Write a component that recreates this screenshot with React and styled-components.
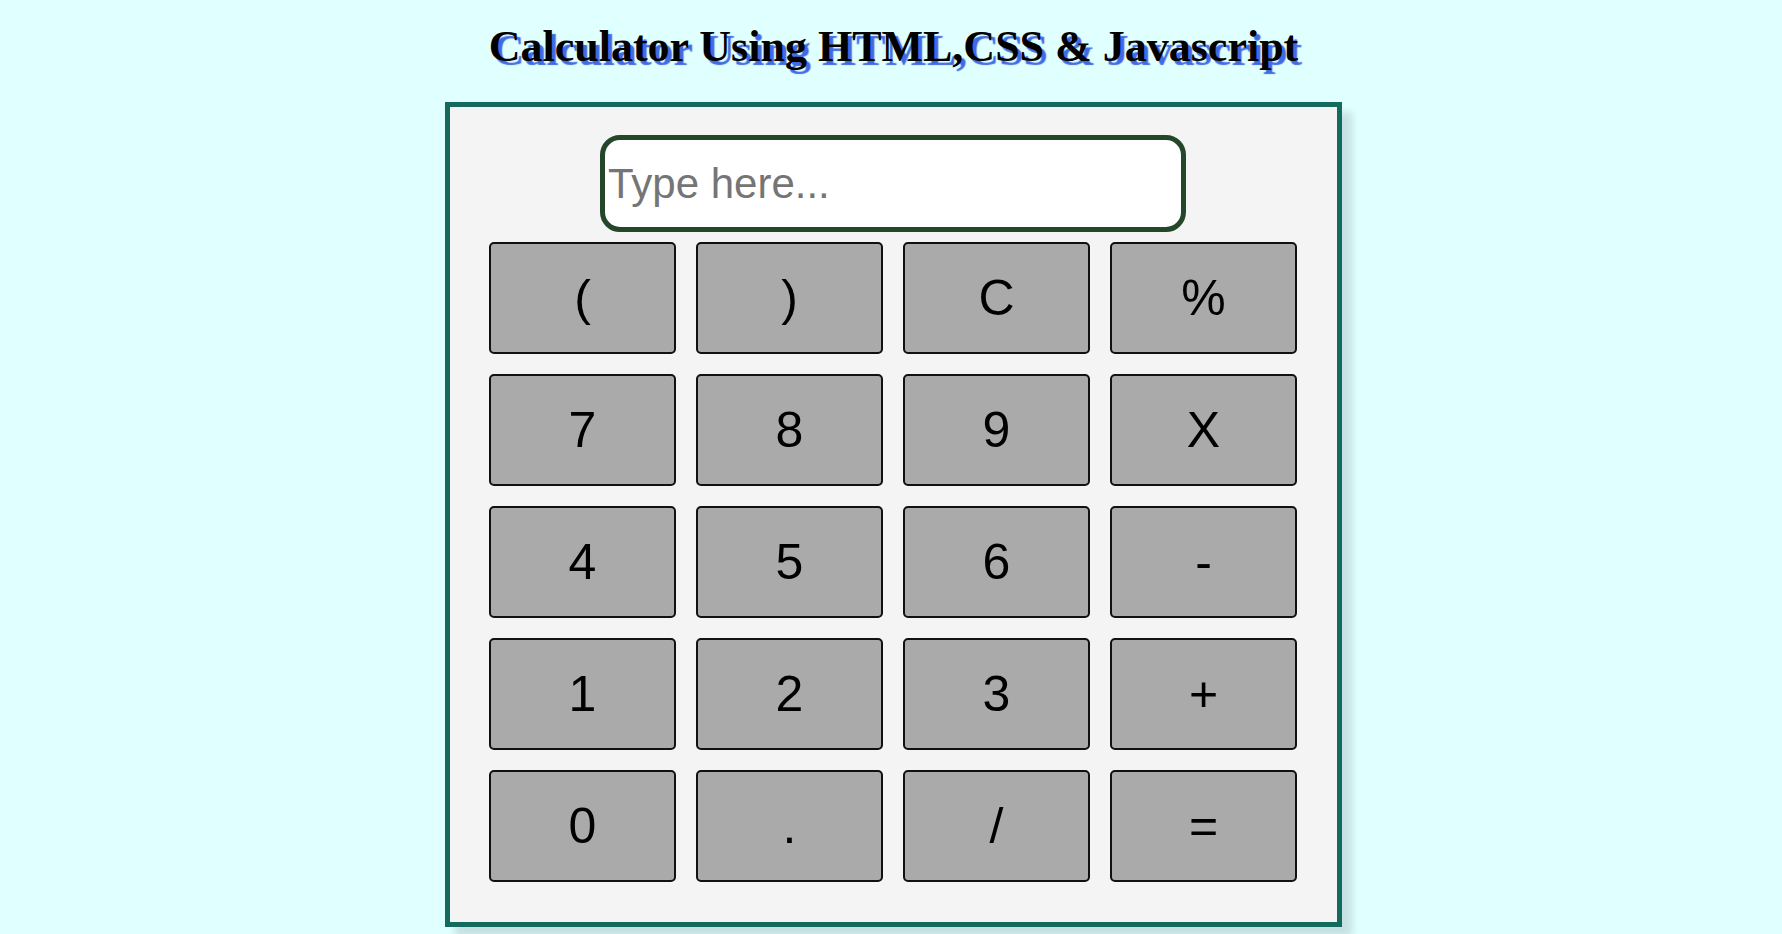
import React from "react";
import styled, { createGlobalStyle } from "styled-components";

const Global = createGlobalStyle`
  html, body {
    margin: 0;
    padding: 0;
    background: #e0ffff;
    overflow: hidden;
  }
  body {
    font-family: "Liberation Sans", Arial, sans-serif;
  }
`;

const Page = styled.div`
  display: flex;
  flex-direction: column;
  align-items: center;
  padding-left: 5px;
  height: 934px;
`;

const Title = styled.h1`
  margin: 21px 0 29px;
  font-family: "Liberation Serif", "Times New Roman", serif;
  font-weight: bold;
  font-size: 44px;
  line-height: 52px;
  color: #000;
  text-shadow: 4px 4px 1px #4169e1;
`;

const Calculator = styled.div`
  box-sizing: border-box;
  width: 897px;
  height: 825px;
  border: 5px solid #156a5e;
  background: #f4f4f4;
  box-shadow: 10px 10px 8px rgba(0, 0, 0, 0.12);
  padding: 28px 40px 0 39px;
  display: flex;
  flex-direction: column;
  align-items: center;
`;

const Display = styled.input`
  box-sizing: border-box;
  width: 586px;
  height: 97px;
  border: 5px solid #24472a;
  border-radius: 20px;
  background: #fff;
  padding: 1px 3px;
  font-family: "Liberation Sans", Arial, sans-serif;
  font-size: 42px;
  color: #000;
  outline: none;
  margin-bottom: 10px;
  &::placeholder {
    color: #757575;
  }
`;

const Keys = styled.div`
  display: grid;
  grid-template-columns: repeat(4, 187px);
  grid-auto-rows: 112px;
  gap: 20px;
`;

const Key = styled.button`
  box-sizing: border-box;
  border: 2px solid #111;
  border-radius: 5px;
  background: #aaaaaa;
  color: #000;
  font-family: "Liberation Sans", Arial, sans-serif;
  font-size: 50px;
  padding: 0;
  cursor: pointer;
`;

const keys = [
  "(", ")", "C", "%",
  "7", "8", "9", "X",
  "4", "5", "6", "-",
  "1", "2", "3", "+",
  "0", ".", "/", "=",
];

export default function App() {
  return (
    <>
      <Global />
      <Page>
        <Title>Calculator Using HTML,CSS &amp; Javascript</Title>
        <Calculator>
          <Display type="text" placeholder="Type here..." />
          <Keys>
            {keys.map((k) => (
              <Key key={k}>{k}</Key>
            ))}
          </Keys>
        </Calculator>
      </Page>
    </>
  );
}
